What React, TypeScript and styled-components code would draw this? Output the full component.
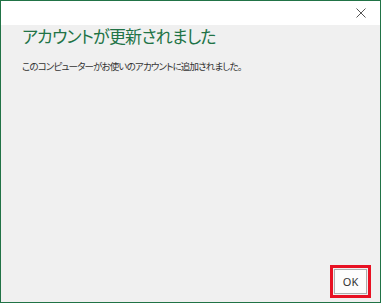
import * as React from "react";
import styled, {createGlobalStyle} from "styled-components";

const GlobalStyle = createGlobalStyle`
    html, body {
        margin: 0;
        padding: 0;
        background: #ffffff;
    }
    * {
        box-sizing: border-box;
    }
`;

const Window = styled.div`
    width: 381px;
    height: 303px;
    border: 1px solid #217346;
    display: flex;
    flex-direction: column;
    font-family: "Noto Sans CJK JP", "Noto Sans", sans-serif;
    background: #f0f0f0;
`;

const TitleBar = styled.div`
    height: 24px;
    background: #ffffff;
    display: flex;
    justify-content: flex-end;
    align-items: center;
    padding-right: 13px;
`;

const CloseButton = styled.button`
    width: 12px;
    height: 12px;
    padding: 0;
    border: none;
    background: transparent;
    display: flex;
    align-items: center;
    justify-content: center;
`;

const Content = styled.div`
    flex: 1;
    padding: 0 0 0 21px;
    display: flex;
    flex-direction: column;
`;

const Heading = styled.h1`
    margin: 0;
    font-size: 17px;
    font-weight: 400;
    line-height: 21px;
    letter-spacing: -0.8px;
    color: #217346;
    font-feature-settings: "palt";
`;

const Message = styled.p`
    margin: 14px 0 0;
    font-size: 9.5px;
    line-height: 12px;
    letter-spacing: -0.85px;
    color: #333333;
    font-feature-settings: "palt";
`;

const Footer = styled.div`
    display: flex;
    justify-content: flex-end;
    padding: 0 13px 8px 0;
`;

const OkButton = styled.button`
    width: 33px;
    height: 25px;
    border: 1px solid #adadad;
    background: #fdfdfd;
    color: #333333;
    font-family: "Noto Sans", sans-serif;
    font-size: 11px;
    padding: 0;
    outline: 3px solid #e81123;
    outline-offset: 1px;
`;

const App: React.FC = () => {
    return (
        <>
            <GlobalStyle />
            <Window>
                <TitleBar>
                    <CloseButton aria-label="閉じる">
                        <svg width="10" height="10" viewBox="0 0 10 10">
                            <path d="M0.5 0.5 L9.5 9.5 M9.5 0.5 L0.5 9.5" stroke="#555555" strokeWidth="1" fill="none" />
                        </svg>
                    </CloseButton>
                </TitleBar>
                <Content>
                    <Heading>アカウントが更新されました</Heading>
                    <Message>このコンピューターがお使いのアカウントに追加されました。</Message>
                </Content>
                <Footer>
                    <OkButton>OK</OkButton>
                </Footer>
            </Window>
        </>
    );
};

export default App;
